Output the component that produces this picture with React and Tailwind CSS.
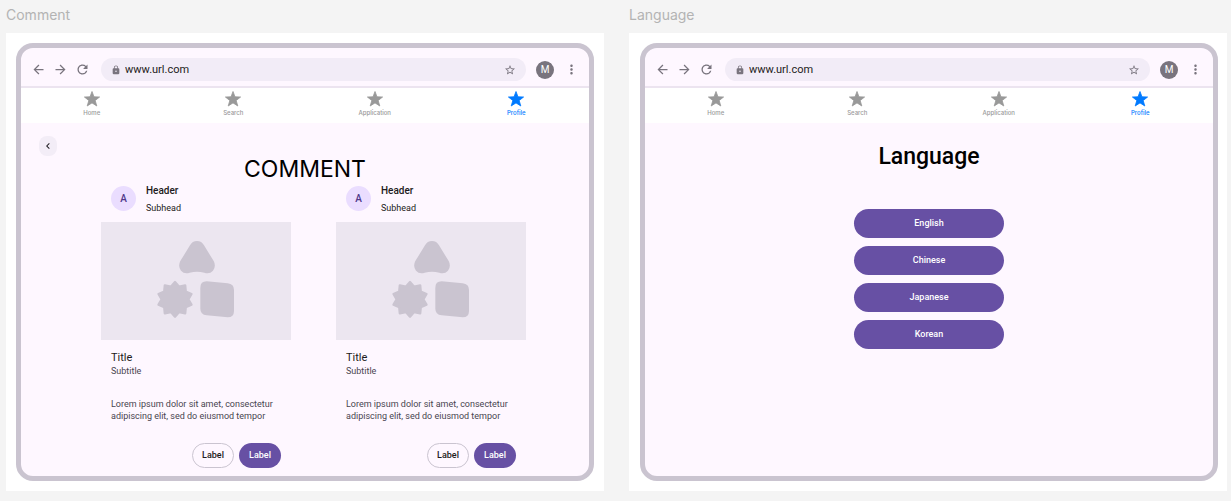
import React from "react";
import {
  MdArrowBack,
  MdArrowForward,
  MdRefresh,
  MdLock,
  MdStarBorder,
  MdMoreVert,
  MdChevronLeft,
} from "react-icons/md";

const tabs = ["Home", "Search", "Application", "Profile"];
const languages = ["English", "Chinese", "Japanese", "Korean"];

const burst = Array.from({ length: 20 }, (_, i) => {
  const angle = (i * Math.PI) / 10;
  const radius = i % 2 === 0 ? 52 : 40;
  return `${255 + radius * Math.sin(angle)},${477 - radius * Math.cos(angle)}`;
}).join(" ");

function StarGlyph() {
  return (
    <svg viewBox="0 0 16 16" className="size-4 fill-current stroke-current" strokeWidth="0.8" strokeLinejoin="round" aria-hidden="true">
      <path d="M8 0.5 L10 5.8 L15.6 6 L11.2 9.5 L12.8 15 L8 11.9 L3.2 15 L4.8 9.5 L0.4 6 L6 5.8 Z" />
    </svg>
  );
}

function BrowserBar({ id }) {
  return (
    <div className="flex h-10 items-center border-b-2 border-[#ece4f0] pt-[5px] pl-2.5 text-[#79747e]">
      <div className="flex gap-[7px]">
        <button type="button" aria-label="Back"><MdArrowBack className="size-[15px]" /></button>
        <button type="button" aria-label="Forward"><MdArrowForward className="size-[15px]" /></button>
        <button type="button" aria-label="Reload"><MdRefresh className="size-[15px]" /></button>
      </div>
      <div className="ml-[11px] flex h-[23px] flex-1 items-center rounded-full bg-[#f2ecf7] px-2.5">
        <label htmlFor={id} aria-label="Address">
          <MdLock className="size-2.5" />
        </label>
        <input
          id={id}
          type="text"
          aria-label="Address"
          defaultValue="www.url.com"
          className="ml-1 h-5 min-w-0 flex-1 bg-transparent font-[Roboto,sans-serif] text-[11px] leading-5 text-[#1d1b20] outline-none"
        />
        <button type="button" aria-label="Bookmark"><MdStarBorder className="size-3" /></button>
      </div>
      <span className="ml-2.5 flex size-[18px] items-center justify-center rounded-full bg-[#79747e] text-[10px] text-white">M</span>
      <button type="button" aria-label="More" className="mr-2.5 ml-2.5"><MdMoreVert className="size-[15px]" /></button>
    </div>
  );
}

function TabBar() {
  return (
    <nav className="grid h-[35px] grid-cols-4 bg-white pr-0.5">
      {tabs.map((tab) => (
        <a
          key={tab}
          href={`#${tab.toLowerCase()}`}
          className={
            tab === "Profile"
              ? "flex flex-col items-center pt-[3px] text-[#007aff]"
              : "flex flex-col items-center pt-[3px] text-[#999999]"
          }
        >
          <StarGlyph />
          <span className="mt-0.5 font-[Inter,sans-serif] text-[6px] leading-[8px] font-medium">{tab}</span>
        </a>
      ))}
    </nav>
  );
}

function Frame({ title, inset, children }) {
  return (
    <section className="flex flex-col">
      <h2 className="h-[33px] pt-[5px] font-[Inter,sans-serif] text-sm text-[#b3b3b3]">{title}</h2>
      <div className={`flex flex-1 flex-col bg-white py-2.5 ${inset}`}>
        <div className="flex flex-1 flex-col overflow-hidden rounded-[17px] border-5 border-[#cac4d0] bg-[#fef7ff]">
          <BrowserBar id={`address-${title.toLowerCase()}`} />
          <TabBar />
          {children}
        </div>
      </div>
    </section>
  );
}

function Card() {
  return (
    <article>
      <header className="flex h-9 items-start gap-2.5 px-2.5">
        <span className="flex size-[25px] items-center justify-center rounded-full bg-[#eaddff] text-[10px] font-medium text-[#4f378a]">A</span>
        <div className="-mt-0.5 text-[#1d1b20]">
          <h4 className="text-[10px] leading-[14px] font-medium">Header</h4>
          <p className="text-[9px] leading-5">Subhead</p>
        </div>
      </header>
      <div className="flex h-[118px] items-center justify-center bg-[#ece6f0]">
        <svg viewBox="192 296 252 252" className="size-[84px] fill-[#cac4d0]" aria-hidden="true">
          <path d="M300 315 Q307 302 321 302 Q335 302 342 315 L371 362 Q379 377 369 391 Q359 402 343 397 Q321 391 299 397 Q283 402 273 391 Q263 377 271 362 Z" />
          <polygon points={burst} className="stroke-[#cac4d0] stroke-[7]" strokeLinejoin="round" />
          <path d="M331 442 Q331 423 350 423 L413 429 Q432 431 432 449 L432 512 Q432 531 413 531 L350 525 Q331 523 331 505 Z" />
        </svg>
      </div>
      <div className="px-2.5 pt-[11px] text-[#49454f]">
        <h4 className="text-[11px] leading-[13px] text-[#1d1b20]">Title</h4>
        <p className="text-[9px] leading-[14px]">Subtitle</p>
        <p className="mt-5 text-[9px] leading-[12px]">Lorem ipsum dolor sit amet, consectetur adipiscing elit, sed do eiusmod tempor</p>
        <div className="mt-[21px] flex justify-end gap-[5px] text-[9px] font-medium">
          <button type="button" className="h-[25px] w-[42px] rounded-full border border-[#cac4d0] text-[#1d1b20]">Label</button>
          <button type="button" className="h-[25px] w-[42px] rounded-full bg-[#6750a4] text-white">Label</button>
        </div>
      </div>
    </article>
  );
}

export default function App() {
  return (
    <main className="grid min-h-screen grid-cols-2 gap-[25px] bg-[#f4f4f4] pr-1 pb-2.5 pl-1.5 font-[Roboto,sans-serif]">
      <Frame title="Comment" inset="px-2.5">
        <div className="px-[18px] pt-[13px]">
          <button type="button" aria-label="Go back" className="flex h-5 w-[18px] items-center justify-center rounded-lg bg-[#f3edf7] text-[#1d1b20]">
            <MdChevronLeft className="size-3" />
          </button>
        </div>
        <h3 className="text-center font-[Inter,sans-serif] text-[23px] leading-[26px] font-normal text-black">COMMENT</h3>
        <div className="grid grid-cols-2 gap-[45px] pt-1 pr-[63px] pl-20">
          <Card />
          <Card />
        </div>
      </Frame>
      <Frame title="Language" inset="pr-[9px] pl-[11px]">
        <h3 className="pt-[21px] text-center text-[23px] leading-[26px] font-medium text-black">Language</h3>
        <div className="flex flex-col items-center gap-2 pt-[39px]">
          {languages.map((language) => (
            <button key={language} type="button" className="h-[29px] w-[150px] rounded-full bg-[#6750a4] text-[9px] font-medium text-white">
              {language}
            </button>
          ))}
        </div>
      </Frame>
    </main>
  );
}
